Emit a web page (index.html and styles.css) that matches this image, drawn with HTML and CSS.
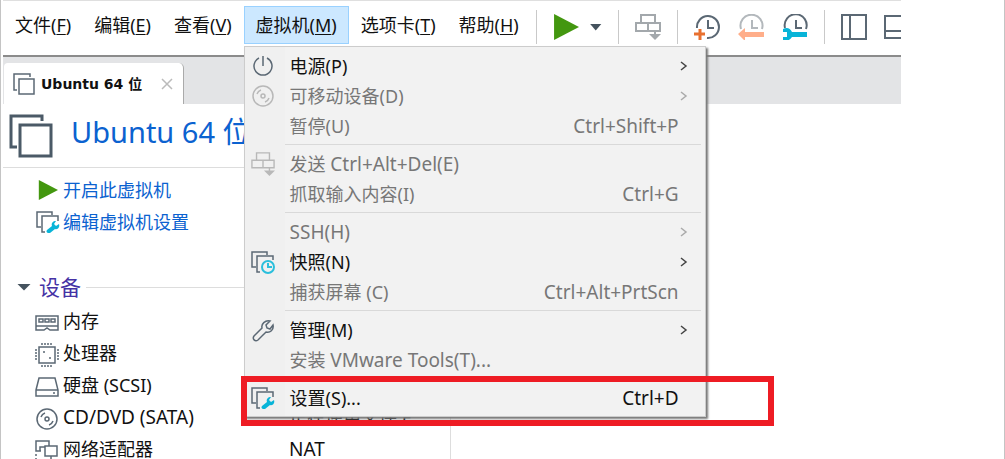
FILE: index.html
```
<!DOCTYPE html>
<html lang="zh-CN">
<head>
    <meta charset="UTF-8">
    <meta name="viewport" content="width=device-width, initial-scale=1.0">
    <title>Ubuntu 64 位</title>
    <link rel="stylesheet" href="styles.css">
</head>
<body>
    <!-- Shared icon shapes -->
    <svg class="defs" aria-hidden="true">
        <symbol id="i-windows" viewBox="0 0 24 24"><path d="M5 18H2V2h16v3M7 7h15v15H7z"/></symbol>
        <symbol id="i-play" viewBox="0 0 24 24"><path class="solid" d="M1 0l23 12L1 24z"/></symbol>
        <symbol id="i-settings" viewBox="0 0 24 24">
            <path d="M5 17H1V2h15v3M9 22H6V6h16v5"/>
            <path class="cyan-fill" d="M12 23a2 2 0 0 1-1-3l5-4c-1-3 1-5 4-5l-2 3 2 2 3-2c1 3-1 6-4 5l-5 4z"/>
        </symbol>
        <symbol id="i-send" viewBox="0 0 26 26"><path d="M6 1h14v8H6zM1 9h12v8H1zM13 9h12v8H13zM20 17v4"/><path class="solid" d="M14 20h12l-6 6z"/></symbol>
        <symbol id="i-disc" viewBox="0 0 24 24"><circle cx="12" cy="12" r="10"/><circle cx="12" cy="12" r="2"/><path d="M6 10q1-3 4-4M18 14q-1 3-4 4"/></symbol>
        <symbol id="i-chevron" viewBox="0 0 10 12"><path d="M2 2l5 4-5 4"/></symbol>
    </svg>

    <div class="page">
        <div class="app">
            <div class="menubar">
                <nav class="menus">
                    <button class="menu-btn">文件(<u>F</u>)</button>
                    <button class="menu-btn">编辑(<u>E</u>)</button>
                    <button class="menu-btn">查看(<u>V</u>)</button>
                    <div class="menu-wrap">
                        <button class="menu-btn open">虚拟机(<u>M</u>)</button>
                        <div class="dropdown">
                            <button class="item"><svg class="icon" viewBox="0 0 24 24"><path d="M8 4a9 9 0 1 0 8 0M12 2v10"/></svg><span>电源(P)</span><svg class="arrow"><use href="#i-chevron"/></svg></button>
                            <button class="item" disabled><svg class="icon"><use href="#i-disc"/></svg><span>可移动设备(D)</span><svg class="arrow"><use href="#i-chevron"/></svg></button>
                            <button class="item" disabled><span>暂停(U)</span><kbd>Ctrl+Shift+P</kbd></button>
                            <hr>
                            <button class="item" disabled><svg class="icon"><use href="#i-send"/></svg><span>发送 <span class="latin">Ctrl+Alt+Del(E)</span></span></button>
                            <button class="item" disabled><span>抓取输入内容(I)</span><kbd>Ctrl+G</kbd></button>
                            <hr>
                            <button class="item" disabled><span class="latin">SSH(H)</span><svg class="arrow"><use href="#i-chevron"/></svg></button>
                            <button class="item"><svg class="icon" viewBox="0 0 24 24"><path d="M5 17H1V2h15v3M9 22H6V6h16v4"/><g class="cyan"><circle cx="17" cy="17" r="6"/><path d="M17 13v4h4"/></g></svg><span>快照(N)</span><svg class="arrow"><use href="#i-chevron"/></svg></button>
                            <button class="item" disabled><span>捕获屏幕 (C)</span><kbd>Ctrl+Alt+PrtScn</kbd></button>
                            <hr>
                            <button class="item"><svg class="icon" viewBox="0 0 24 24"><path d="M3 18l8-8c-1-4 3-8 8-7l-4 4 1 3 3 1 3-4c1 5-3 8-7 7l-8 8c-3 2-6-1-4-4z"/></svg><span>管理(M)</span><svg class="arrow"><use href="#i-chevron"/></svg></button>
                            <button class="item" disabled><span>安装 <span class="latin">VMware Tools(T)...</span></span></button>
                            <hr>
                            <button class="item"><svg class="icon"><use href="#i-settings"/></svg><span>设置(S)...</span><kbd>Ctrl+D</kbd></button>
                            <div class="highlight"></div>
                        </div>
                    </div>
                    <button class="menu-btn">选项卡(<u>T</u>)</button>
                    <button class="menu-btn">帮助(<u>H</u>)</button>
                </nav>
                <div class="tools">
                    <div class="group">
                        <button class="tool green" aria-label="开启"><svg><use href="#i-play"/></svg></button>
                        <button class="caret" aria-label="电源选项"></button>
                    </div>
                    <div class="group">
                        <button class="tool muted" aria-label="发送 Ctrl+Alt+Del"><svg><use href="#i-send"/></svg></button>
                    </div>
                    <div class="group clocks">
                        <button class="tool" aria-label="拍摄快照"><svg viewBox="0 0 26 26"><path d="M3 14a11 11 0 1 1 10 10M14 6v8h6"/><path class="orange" d="M6 15v11M0 20h11"/></svg></button>
                        <button class="tool faded" aria-label="恢复快照"><svg viewBox="0 0 26 26"><path d="M3 15a11 11 0 1 1 21 0M14 6v8h6"/><path class="peach-fill" d="M0 20l7-6v4h19v5H7v4z"/></svg></button>
                        <button class="tool" aria-label="管理快照"><svg viewBox="0 0 26 26"><path d="M3 14a11 11 0 1 1 21 1M14 6v8h6"/><path class="cyan-fill" d="M1 15q6-3 9 3h15v5H10q-3 5-9 3v-3h4v-5H1z"/></svg></button>
                    </div>
                    <div class="group views">
                        <button class="tool" aria-label="显示库"><svg viewBox="0 0 26 26"><path d="M1 1h24v24H1zM9 1v24"/></svg></button>
                        <button class="tool" aria-label="显示缩略图"><svg viewBox="0 0 26 26"><path d="M1 2h24v22H1zM1 17h24"/></svg></button>
                    </div>
                </div>
            </div>

            <div class="tabs">
                <div class="tab">
                    <svg class="tab-icon"><use href="#i-windows"/></svg>
                    <span>Ubuntu 64 位</span>
                    <button class="close" aria-label="关闭"><svg viewBox="0 0 12 12"><path d="M1 1l10 10M11 1L1 11"/></svg></button>
                </div>
            </div>

            <header class="title">
                <svg viewBox="0 0 44 44"><path d="M8 33H2V2h31v5M11 11h31v31H11z"/></svg>
                <h1>Ubuntu 64 位</h1>
            </header>

            <main class="panel">
                <div class="actions">
                    <a href="#"><svg class="green small"><use href="#i-play"/></svg>开启此虚拟机</a>
                    <a href="#"><svg><use href="#i-settings"/></svg>编辑虚拟机设置</a>
                </div>
                <h2><i class="caret"></i>设备</h2>
                <table class="devices">
                    <tr><th><svg viewBox="0 0 24 24"><path d="M1 5h22v14h-8l-3-2-3 2H1zM1 15h22"/><path d="M4 8h4v3H4zM10 8h4v3h-4zM16 8h4v3h-4z"/></svg>内存</th><td></td></tr>
                    <tr><th><svg viewBox="0 0 24 24"><path d="M4 4h16v16H4z"/><path stroke-dasharray="2 1" d="M6 1h12M6 23h12M1 6v12M23 6v12"/><path d="M8 9h2M14 15h2"/></svg>处理器</th><td></td></tr>
                    <tr><th><svg viewBox="0 0 24 24"><path d="M1 15L4 3h16l3 12v6H1zM1 15h22M18 18h2"/></svg>硬盘 (SCSI)</th><td></td></tr>
                    <tr><th class="latin"><svg><use href="#i-disc"/></svg>CD/DVD (SATA)</th><td>正在使用文件 E</td></tr>
                    <tr><th><svg viewBox="0 0 24 24"><path d="M6 12H1V2h13v5M10 7h12v10H10zM16 17v3M12 21h8"/><path d="M5 12V8h5"/><path stroke-dasharray="2 2" d="M1 15v8h10"/></svg>网络适配器</th><td class="latin">NAT</td></tr>
                </table>
            </main>
        </div>
    </div>
</body>
</html>
```
FILE: styles.css
```
* {
    box-sizing: border-box;
}
body {
    margin: 0;
    font-family: "Noto Sans", "Noto Sans CJK SC", sans-serif;
    font-size: 18px;
    line-height: 30px;
    color: #111;
    background: #fff;
}
button {
    font: inherit;
    color: inherit;
    background: none;
    border: 0;
    padding: 0;
}
svg {
    flex: none;
    fill: none;
    stroke: #5b6874;
    stroke-width: 1.5;
}
.defs {
    position: absolute;
    width: 0;
    height: 0;
}
.solid {
    fill: currentColor;
    stroke: none;
}
.cyan {
    stroke: #2bbfdc;
    stroke-width: 2;
}
.cyan-fill {
    fill: #08b4d8;
    stroke: none;
}
.orange {
    stroke: #e8702f;
}
.peach-fill {
    fill: #ffae8a;
    stroke: none;
}
.green {
    color: #43970f;
}
.latin {
    font-size: 19px;
}
.page {
    height: 100vh;
    overflow: hidden;
    padding: 0 103px 0 2px;
    border-left: 1px solid #c4c4c4;
    border-right: 1px solid #c4c4c4;
}
.app {
    height: 100%;
    overflow: hidden;
    border-top: 1px solid #dfdfdf;
}

/* Menu bar and toolbar */
.menubar {
    display: flex;
    height: 56px;
    padding-top: 5px;
    border-bottom: 2px solid #8b8b8b;
}
.menus {
    display: flex;
    flex: none;
    align-items: flex-start;
    gap: 1px;
    padding-left: 1px;
}
.menu-btn {
    height: 38px;
    padding: 0 10px;
    border: 1px solid transparent;
    white-space: nowrap;
}
.menu-btn u {
    text-underline-offset: 2px;
}
.menu-btn.open {
    padding: 0 11px;
    background: #cce8ff;
    border-color: #99d1ff;
}
.menu-wrap {
    position: relative;
}
.tools {
    display: flex;
    height: 34px;
    margin: 4px 0 0 6px;
}
.group {
    display: flex;
    flex: none;
    align-items: center;
    gap: 11px;
    padding: 0 16px;
    border-left: 1px solid #c9c9c9;
}
.clocks {
    gap: 18px;
}
.views {
    gap: 17px;
}
.tool, .tool svg {
    display: block;
    width: 26px;
    height: 26px;
}
.tool svg {
    stroke-width: 2;
}
.tool .orange {
    stroke-width: 3;
}
.muted {
    color: #a3a8ac;
}
.muted svg {
    stroke: #a3a8ac;
}
.faded svg {
    stroke: #b3b8bc;
}
.caret {
    width: 12px;
    height: 7px;
    background: #45535e;
    clip-path: polygon(0 0, 100% 0, 50% 100%);
}

/* Drop-down menu */
.dropdown {
    position: absolute;
    z-index: 2;
    top: 40px;
    left: 0;
    width: 462px;
    padding: 4px 3px 3px;
    background: linear-gradient(to right, #f0f0f0 40px, #f2f2f2 40px);
    border: 1px solid #ccc;
    box-shadow: 2px 2px 2px #777;
}
.item {
    display: grid;
    grid-template-columns: 40px 1fr auto;
    align-items: center;
    width: 100%;
    height: 30px;
    padding: 0 23px 0 2px;
    text-align: left;
    white-space: nowrap;
}
.item > span {
    grid-column: 2;
}
.item:disabled {
    color: #777;
}
.item kbd {
    font-family: inherit;
    font-size: 19px;
}
.item .icon {
    grid-column: 1;
    width: 24px;
    height: 24px;
    margin-left: 1px;
}
.item:disabled .icon {
    color: #b8b8b8;
    stroke: #b8b8b8;
}
.arrow {
    width: 10px;
    height: 12px;
    margin-right: -16px;
    stroke: #444;
}
.item:disabled .arrow {
    stroke: #aaa;
}
.dropdown hr {
    height: 1px;
    margin: 3px 1px 4px 37px;
    border: 0;
    background: #d9d9d9;
}
.highlight {
    position: absolute;
    left: -4px;
    right: -69px;
    bottom: -10px;
    height: 50px;
    border: 6px solid #ee1c24;
}

/* Tabs */
.tabs {
    height: 47px;
    padding: 6px 1px 0;
    background: #e3e4e6;
}
.tab {
    display: flex;
    align-items: center;
    width: 180px;
    height: 41px;
    padding: 0 10px 0 8px;
    background: #fff;
    border-right: 1px solid #aaa;
    border-radius: 4px 5px 0 0;
    font-family: "DejaVu Sans", "Noto Sans CJK SC", sans-serif;
    font-size: 14px;
    font-weight: bold;
    white-space: nowrap;
}
.tab-icon {
    width: 24px;
    height: 24px;
    margin-right: 5px;
}
.close {
    margin-left: auto;
}
.close svg {
    display: block;
    width: 12px;
    height: 12px;
    stroke: #bbb;
}

/* Virtual machine page */
.title {
    display: flex;
    align-items: center;
    gap: 18px;
    width: 448px;
    height: 64px;
    padding-left: 6px;
    border-bottom: 1px solid #ddd;
}
.title svg {
    width: 44px;
    height: 44px;
    stroke: #4b5a67;
    stroke-width: 3;
}
.title h1 {
    margin: 0;
    padding-bottom: 8px;
    font-size: 29px;
    font-weight: normal;
    color: #0b62d0;
}
.panel {
    width: 448px;
    min-height: 100%;
    padding-top: 6px;
    border-right: 1px solid #ddd;
}
.actions {
    padding-left: 33px;
}
.actions a {
    display: flex;
    align-items: center;
    gap: 3px;
    height: 32px;
    color: #0b62d0;
    text-decoration: none;
}
.actions svg {
    width: 24px;
    height: 24px;
}
.actions .small {
    height: 20px;
}
.actions .green {
    color: #43970f;
}
h2 {
    display: flex;
    align-items: center;
    margin: 33px 0 2px;
    padding-left: 14px;
    font-size: 21px;
    font-weight: normal;
    line-height: 32px;
    color: #4532a5;
}
h2 .caret {
    width: 14px;
    margin-right: 8px;
}
h2::after {
    content: "";
    flex: 1;
    height: 1px;
    margin-left: 5px;
    background: #ddd;
}
.devices {
    width: 100%;
    border-collapse: collapse;
    table-layout: fixed;
}
.devices th, .devices td {
    height: 32px;
    padding: 0;
    font-weight: normal;
    text-align: left;
    white-space: nowrap;
}
.devices th {
    width: 286px;
    padding-left: 32px;
}
.devices svg {
    width: 24px;
    height: 24px;
    margin-right: 4px;
    vertical-align: middle;
}
```
